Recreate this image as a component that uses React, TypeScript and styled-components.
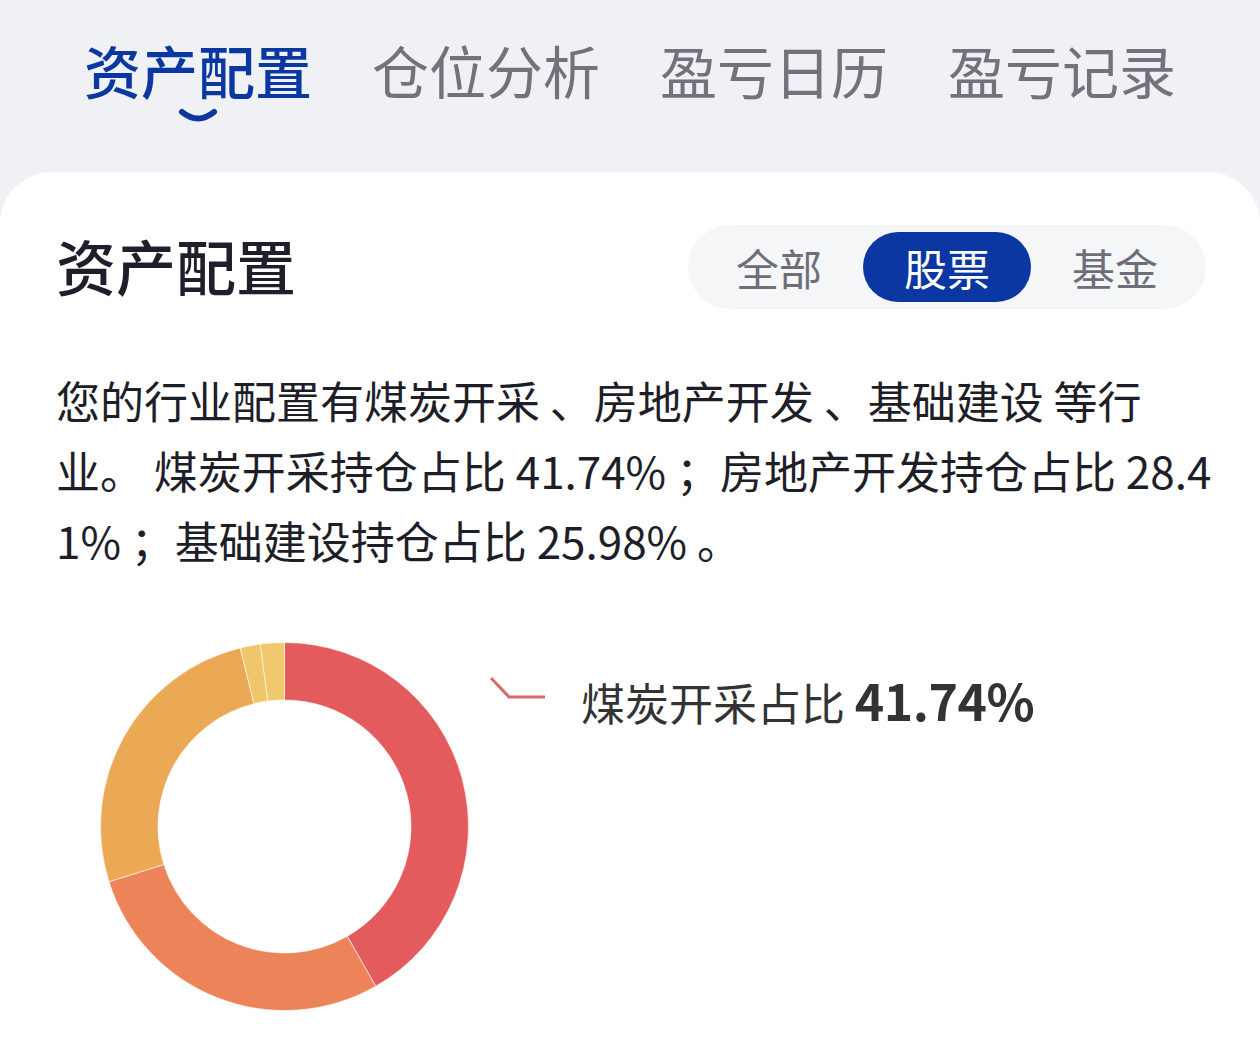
import { useState } from "react";
import styled, { createGlobalStyle } from "styled-components";

const GlobalStyle = createGlobalStyle`
	html, body {
		margin: 0;
		padding: 0;
		background: #eff1f5;
		font-family: "Noto Sans CJK SC", "Noto Sans", sans-serif;
	}
`;

const Page = styled.div`
	min-height: 100vh;
	display: flex;
	flex-direction: column;
`;

const TabBar = styled.nav`
	display: flex;
	gap: 60px;
	padding: 35px 0 0 84px;
	height: 137px;
	box-sizing: border-box;
`;

const Tab = styled.div<{ $active?: boolean }>`
	display: flex;
	flex-direction: column;
	align-items: center;
	font-size: 57px;
	line-height: 68px;
	font-weight: ${(p) => (p.$active ? 500 : 400)};
	color: ${(p) => (p.$active ? "#0b38a0" : "#72727c")};
	cursor: pointer;
`;

const Smile = styled.svg`
	margin-top: 5px;
	display: block;
`;

const Card = styled.section`
	flex: 1;
	background: #ffffff;
	border-radius: 52px 52px 0 0;
	padding: 53px 56px 0;
	margin-top: 35px;
`;

const CardHeader = styled.div`
	display: flex;
	align-items: center;
	justify-content: space-between;
`;

const CardTitle = styled.h2`
	margin: 0;
	font-size: 60px;
	font-weight: 500;
	color: #1f1f2b;
	line-height: 1;
	transform: translateY(-2px);
`;

const Segmented = styled.div`
	display: flex;
	padding: 7px;
	margin-right: -2px;
	background: #f5f6f8;
	border-radius: 42px;
`;

const Segment = styled.button<{ $active?: boolean }>`
	width: 168px;
	height: 70px;
	border: none;
	border-radius: 35px;
	padding: 0;
	font-family: inherit;
	font-size: 43px;
	line-height: 70px;
	cursor: pointer;
	background: ${(p) => (p.$active ? "#0a37a1" : "transparent")};
	color: ${(p) => (p.$active ? "#ffffff" : "#6e6e78")};
`;

const Summary = styled.p`
	margin: 56px -16px 0 0;
	font-size: 44px;
	line-height: 70px;
	color: #1e1e28;
	word-break: break-all;
`;

const ChartArea = styled.div`
	position: relative;
	margin-top: 23px;
	height: 440px;
`;

const Callout = styled.div`
	position: absolute;
	left: 525px;
	top: 71px;
	font-size: 44px;
	line-height: 60px;
	color: #333333;
	white-space: nowrap;
`;

const CalloutValue = styled.span`
	font-size: 50px;
	font-weight: 600;
	letter-spacing: -0.5px;
`;

interface Slice {
	name: string;
	value: number;
	color: string;
}

const slices: Slice[] = [
	{ name: "煤炭开采", value: 41.74, color: "#e45b5e" },
	{ name: "房地产开发", value: 28.41, color: "#ed8358" },
	{ name: "基础建设", value: 25.98, color: "#eca955" },
	{ name: "其他", value: 1.77, color: "#efc66b" },
	{ name: "其他2", value: 2.1, color: "#f0c86d" },
];

const CX = 228.5;
const CY = 228.5;
const R_OUT = 184;
const R_IN = 126.5;

const point = (r: number, angle: number) => {
	// angle measured clockwise from 12 o'clock
	const rad = ((angle - 90) * Math.PI) / 180;
	return [CX + r * Math.cos(rad), CY + r * Math.sin(rad)];
};

const arcPath = (start: number, end: number) => {
	const large = end - start > 180 ? 1 : 0;
	const [x1, y1] = point(R_OUT, start);
	const [x2, y2] = point(R_OUT, end);
	const [x3, y3] = point(R_IN, end);
	const [x4, y4] = point(R_IN, start);
	return `M${x1} ${y1} A${R_OUT} ${R_OUT} 0 ${large} 1 ${x2} ${y2} L${x3} ${y3} A${R_IN} ${R_IN} 0 ${large} 0 ${x4} ${y4} Z`;
};

const tabs = ["资产配置", "仓位分析", "盈亏日历", "盈亏记录"];
const kinds = ["全部", "股票", "基金"];

const App = () => {
	const [tab, setTab] = useState(0);
	const [kind, setKind] = useState(1);

	const total = slices.reduce((sum, s) => sum + s.value, 0);
	let cursor = 0;
	const arcs = slices.map((s) => {
		const start = cursor;
		cursor += (s.value / total) * 360;
		return { ...s, d: arcPath(start, cursor) };
	});

	return (
		<Page>
			<GlobalStyle />
			<TabBar>
				{tabs.map((t, i) => (
					<Tab key={t} $active={i === tab} onClick={() => setTab(i)}>
						{t}
						{i === tab && (
							<Smile width="40" height="16" viewBox="0 0 40 16">
								<path
									d="M4 4 Q20 17 36 4"
									fill="none"
									stroke="#0b38a0"
									strokeWidth="6"
									strokeLinecap="round"
								/>
							</Smile>
						)}
					</Tab>
				))}
			</TabBar>
			<Card>
				<CardHeader>
					<CardTitle>资产配置</CardTitle>
					<Segmented>
						{kinds.map((k, i) => (
							<Segment key={k} $active={i === kind} onClick={() => setKind(i)}>
								{k}
							</Segment>
						))}
					</Segmented>
				</CardHeader>
				<Summary>
					您的行业配置有煤炭开采 、房地产开发 、基础建设 等行业。 煤炭开采持仓占比 41.74% ；房地产开发持仓占比 28.41% ；基础建设持仓占比 25.98% 。
				</Summary>
				<ChartArea>
					<svg width="1148" height="440" viewBox="0 0 1148 440">
						{arcs.map((a) => (
							<path key={a.name} d={a.d} fill={a.color} stroke="#fff" strokeWidth="0.6" />
						))}
						<polyline
							points="435,80 453,99 489,99"
							fill="none"
							stroke="#d9686a"
							strokeWidth="3"
						/>
					</svg>
					<Callout>
						煤炭开采占比 <CalloutValue>41.74%</CalloutValue>
					</Callout>
				</ChartArea>
			</Card>
		</Page>
	);
};

export default App;
